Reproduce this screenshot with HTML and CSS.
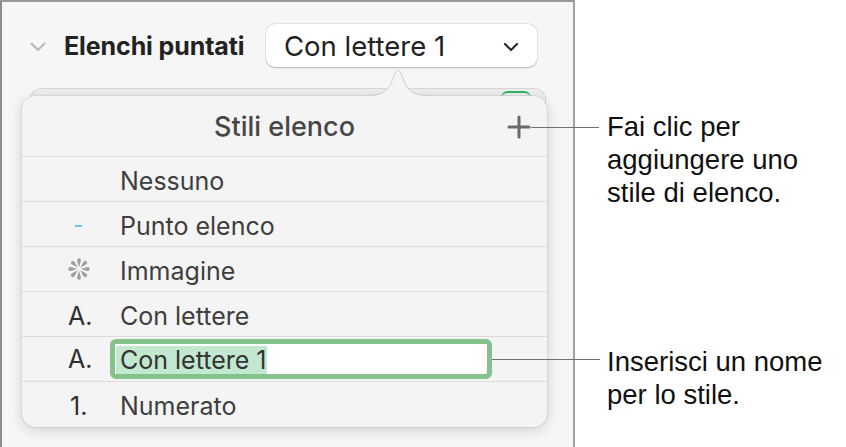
FILE: index.html
```html
<!DOCTYPE html>
<html lang="it">
<head>
  <meta charset="UTF-8">
  <title>Stili elenco</title>
  <link rel="stylesheet" href="styles.css">
</head>
<body>
  <div class="page">
    <div class="sidebar">
      <div class="section-row">
        <svg class="disclosure" width="16" height="10" viewBox="0 0 16 10"><polyline points="1.5,1.5 8,8 14.5,1.5" fill="none" stroke="#b8b8b8" stroke-width="2" stroke-linecap="round" stroke-linejoin="round"/></svg>
        <span class="section-title">Elenchi puntati</span>
        <div class="popup-button">
          <span>Con lettere 1</span>
          <svg width="16" height="10" viewBox="0 0 16 10"><polyline points="2,2 8,8 14,2" fill="none" stroke="#2a2a2a" stroke-width="2.2" stroke-linecap="round" stroke-linejoin="round"/></svg>
        </div>
      </div>
      <div class="underlay"><span class="toggle"></span></div>

      <div class="popover">
        <svg class="popover-arrow" width="66" height="28" viewBox="0 0 66 28">
          <path d="M0,27 C14,27 20,25 26,16 L30,5 C32,1 34,1 36,5 L40,16 C46,25 52,27 66,27 Z" fill="#f4f4f4"/>
          <path d="M0,26.5 C14,26.5 20,24.5 25.5,15.5 L30,4.5 C32,0.5 34,0.5 36,4.5 L40.5,15.5 C46,24.5 52,26.5 66,26.5" fill="none" stroke="#cfcfcf" stroke-width="1"/>
        </svg>
        <div class="popover-head">
          <span class="popover-title">Stili elenco</span>
          <span class="add-button">
            <svg width="24" height="24" viewBox="0 0 24 24"><path d="M12,2 V22 M2,12 H22" stroke="#6a6a6a" stroke-width="3" stroke-linecap="round"/></svg>
          </span>
        </div>
        <ul class="style-list">
          <li><span class="marker"></span><span class="name">Nessuno</span></li>
          <li><span class="marker"><span class="dash"></span></span><span class="name">Punto elenco</span></li>
          <li>
            <span class="marker">
              <svg class="asterisk" width="24" height="24" viewBox="-12 -12 24 24">
                <g fill="#9e9e9e">
                  <path id="spoke" d="M0,-1.8 C0.7,-4.5 1.9,-7.2 1.9,-8.8 A1.9,1.9 0 0 0 -1.9,-8.8 C-1.9,-7.2 -0.7,-4.5 0,-1.8 Z"/>
                  <use href="#spoke" transform="rotate(45)"/>
                  <use href="#spoke" transform="rotate(90)"/>
                  <use href="#spoke" transform="rotate(135)"/>
                  <use href="#spoke" transform="rotate(180)"/>
                  <use href="#spoke" transform="rotate(225)"/>
                  <use href="#spoke" transform="rotate(270)"/>
                  <use href="#spoke" transform="rotate(315)"/>
                </g>
              </svg>
            </span>
            <span class="name">Immagine</span>
          </li>
          <li><span class="marker">A.</span><span class="name">Con lettere</span></li>
          <li class="editing"><span class="marker">A.</span><span class="name-field"><span class="selected">Con lettere 1</span></span></li>
          <li><span class="marker num">1.</span><span class="name">Numerato</span></li>
        </ul>
      </div>
    </div>

    <div class="notes">
      <p class="note note-add">Fai clic per aggiungere uno stile di elenco.</p>
      <p class="note note-name">Inserisci un nome per lo stile.</p>
    </div>
  </div>
</body>
</html>
```

FILE: styles.css
```css
* { box-sizing: border-box; }
body { margin: 0; background: #fff; font-family: Inter, "Liberation Sans", sans-serif; }
.page { display: flex; width: 846px; height: 447px; overflow: hidden; }

.sidebar { position: relative; width: 575px; height: 447px; flex: none; background: #f6f6f6; border-left: 2px solid #8c8c8c; border-top: 2px solid #9a9a9a; border-right: 2px solid #a0a0a0; }
.section-row { display: flex; align-items: center; height: 43px; margin-top: 22px; padding-left: 28px; }
.disclosure { margin-top: 2px; }
.section-title { width: 202px; margin-left: 18px; font-size: 25px; font-weight: 700; color: #222; letter-spacing: -0.1px; white-space: nowrap; }
.popup-button { display: flex; align-items: center; justify-content: space-between; width: 271px; height: 43px; padding: 0 18px 0 18px; background: #fff; border-radius: 9px; box-shadow: 0 0.5px 1.5px rgba(0,0,0,0.25), 0 0 0 0.5px rgba(0,0,0,0.06); font-size: 27.5px; color: #222; }
.popup-button svg { margin-top: 3px; }

.underlay { position: relative; height: 24px; margin: 21px 27px 0 28px; border: 1px solid #d6d6d6; border-bottom: none; border-radius: 12px 12px 0 0; background: #efefef; }
.toggle { position: absolute; right: 14px; top: 2px; width: 30px; height: 14px; border-radius: 7px; border-top: 2px solid #2fb463; }

.popover { position: absolute; left: 20px; top: 94px; width: 525px; height: 331px; background: #f4f4f4; border-radius: 14px; box-shadow: 0 0 0 1px rgba(0,0,0,0.06), 0 3px 14px rgba(0,0,0,0.16); }
.popover-arrow { position: absolute; left: 343px; top: -27px; }
.popover-head { position: relative; display: flex; align-items: center; justify-content: center; height: 61px; border-bottom: 1px solid #dcdcdc; }
.popover-title { font-size: 27px; font-weight: 500; color: #464646; }
.add-button { position: absolute; right: 16px; top: 19px; width: 24px; height: 24px; }
.add-button::after { content: ""; position: absolute; left: 24px; top: 11.5px; width: 68px; height: 1px; background: #707070; }

.style-list { list-style: none; margin: 0; padding: 0; }
.style-list li { display: flex; align-items: center; height: 45px; padding-top: 4px; border-bottom: 1px solid #dcdcdc; font-size: 25px; color: #3e3e3e; }
.style-list li:last-child { border-bottom: none; height: 44px; }
.marker { display: flex; align-items: center; width: 98px; padding-left: 46px; color: #2e2e2e; }
.marker.num { padding-left: 48px; }
.asterisk { margin: -4px 0 0 -1px; }
.dash { display: block; width: 7px; height: 2px; margin-left: 7px; background: #6cc4f4; }

.editing { position: relative; }
.style-list li.editing { padding-top: 0; }
.name-field { position: relative; display: flex; align-items: center; width: 382px; height: 40px; margin-left: -10px; padding: 2px 0 0 1px; background: #fff; border: 5px solid #84c18b; border-radius: 6px; }
.name-field::after { content: ""; position: absolute; left: 377px; top: 14.5px; width: 108px; height: 1px; background: #707070; }
.selected { padding: 0 0 0 4px; background: #c3e8d0; color: #333; line-height: 28px; }

.notes { flex: 1; padding: 110px 0 0 32px; }
.note { margin: 0; font-family: "Liberation Sans", Arial, sans-serif; font-size: 27.5px; line-height: 33px; color: #111; }
.note-add { width: 230px; }
.note-name { width: 240px; margin-top: 136px; }
```
